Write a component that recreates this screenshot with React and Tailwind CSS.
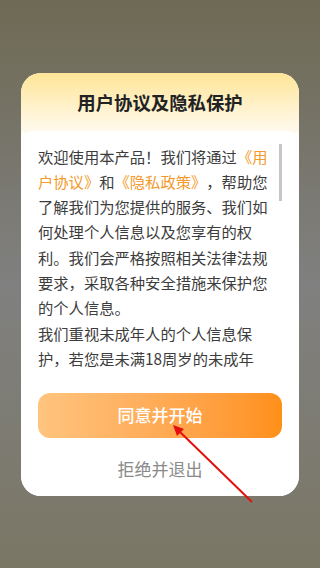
import React from "react";

const PolicyDialog = () => {
  return (
    <div className="w-[278px] h-[423px] rounded-[20px] overflow-hidden bg-white flex flex-col">
      {/* header */}
      <div className="h-[60px] shrink-0 bg-gradient-to-b from-[#ffe596] to-[#fffaf0] flex items-center justify-center">
        <h1 className="text-[18.4px] font-bold text-[#222] leading-none">用户协议及隐私保护</h1>
      </div>

      {/* body */}
      <div className="flex-1 bg-white rounded-t-[14px] -mt-[2px] px-[17px] flex flex-col">
        <div className="relative mt-[13px] h-[236px] overflow-hidden">
          <p className="w-[232px] text-[15.3px] leading-[25.3px] text-[#3c3c3c] [text-spacing-trim:space-all]">
            欢迎使用本产品！我们将通过<span className="text-[#f39a2b]">《用户协议》</span>和<span className="text-[#f39a2b]">《隐私政策》</span>，帮助您了解我们为您提供的服务、我们如何处理个人信息以及您享有的权利。我们会严格按照相关法律法规要求，采取各种安全措施来保护您的个人信息。
            <br />
            我们重视未成年人的个人信息保护，若您是未满18周岁的未成年人，请在监护人的陪同下阅读本协议。
          </p>
          <div className="absolute left-0 right-0 bottom-0 h-[9px] bg-white" />
          {/* scrollbar thumb */}
          <div className="absolute right-[0px] top-0 w-[3.5px] h-[57px] bg-[#c6c6c6]" />
        </div>

        <button className="mt-[13px] h-[45px] w-full rounded-[12px] bg-gradient-to-r from-[#ffc47e] to-[#ff9016] text-white text-[17px] font-medium">
          同意并开始
        </button>
        <button className="mt-[8px] h-[46px] w-full text-[17px] text-[#8a8a8a]">
          拒绝并退出
        </button>
      </div>
    </div>
  );
};

export default function App() {
  return (
    <div
      className="relative w-[320px] h-[568px] overflow-hidden bg-gradient-to-b from-[#6e6a54] via-[#808080] to-[#7a7765] flex items-center justify-center"
      style={{ fontFamily: '"Noto Sans CJK SC", "Noto Sans", sans-serif' }}
    >
      <PolicyDialog />
      {/* red annotation arrow */}
      <svg className="absolute left-0 top-0 pointer-events-none" width="320" height="568">
        <line x1="252" y1="502" x2="179" y2="431" stroke="#e3100f" strokeWidth="2" />
        <polygon points="173,425 184,429 177,436" fill="#e3100f" />
      </svg>
    </div>
  );
}
